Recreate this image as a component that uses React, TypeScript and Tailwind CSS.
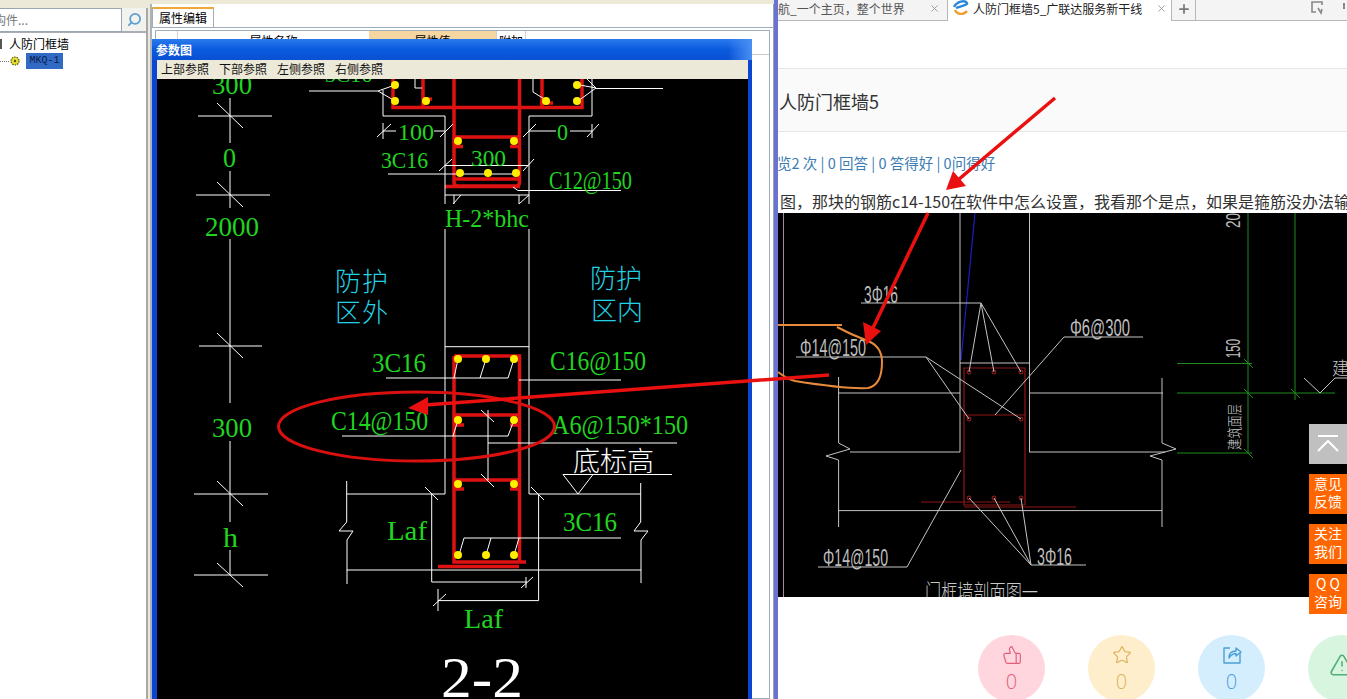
import { Search, ThumbsUp, Star, TriangleAlert, X, Plus } from 'lucide-react'

const cadWhite = [
  // left dimension column
  'M230 98V143M198 116H272M217 103L243 128',
  'M230 171V208M196 195H270M217 182L243 207',
  'M230 239V403M199 346H262M217 333L243 358',
  'M230 441V522M194 494H268M217 481L243 506',
  'M230 550V575M194 575H268M217 563L243 587',
  // top section
  'M309 91H378L395 85M378 91L395 101M383 116V90M383 116H445M529 116H592V79M587 79L596 88L580 85M596 88L578 101M596 88.5H663',
  'M415 79V88H422M533 79V92L546 100',
  'M383 123V139M377 137L391 124M383 131H396M434 131H445M440 137L453 124M523 137L536 124M529 131H556M570 131H592M587 137L599 124M592 124V138',
  'M388 174H516M445 165.5H528M439 171L452 159M523 171L534 159',
  'M518 190.5H621M513 187L518 190.5M445 195H529M453 204L461 195M519 204L529 195M454 195V204M519 195V204',
  'M445 116V204M529 116V204M445 229V494M529 229V494M445 346.7H529',
  // mid leaders
  'M386 378H508M454 378L458 359M480 378L486 359M508 378L514 359M519 380H621',
  'M342 436H508M453 436L458 420M508 436L514 420',
  'M488 443H677M488 410V480M481 410L494 422M481 474L494 487',
  'M563 474.5H672M563 474.5L578 494L593 474.5',
  // lower wall
  'M346.7 494H445M529 494H640.7M346.7 481V522L339 531H353L347 540V584M640.7 483V522L634 531H648L641 540V583',
  'M346.7 570H641M431.7 494V582H527M538.6 494V600.6H438M438 589V611M433 606L446 594M526 577V588M521 588L533 577',
  'M425 487L438 500M531 487L544 500',
  'M464 538H621M464 538L459 555M491 538L486 555M519 538L514 555',
]

const cadDots = [
  [395, 85], [395, 101], [426, 101], [546, 101], [577, 85], [577, 101],
  [458, 141], [514, 141], [460, 173], [488, 173], [516, 173],
  [458, 359], [486, 359], [514, 359], [458, 420], [514, 420],
  [458, 484], [514, 484], [458, 555], [486, 555], [514, 555],
]

const cadRed =
  'M393 79V107.5H582V79M423 79V107M542 79V107M454 79V182Q454 186 458 186H516Q519.5 186 519.5 182V79M454 137H519M454 179H519' +
  'M445 186.5H520M454 356H519.5V562M454 356V562H526M438 566.5H519M454 415H519M454 480H519M455 146.5H463M510 146.5H519M455 425H464M510 425H519M455 489H464M510 489H519M423 99H432M540 103H553'

const cadGreen: [number, number, number, number, string][] = [
  [212, 94, 40, 28, '300'],
  [223, 167, 13, 28, '0'],
  [205, 236, 54, 28, '2000'],
  [212, 437, 40, 28, '300'],
  [223, 547, 15, 28, 'h'],
  [325, 82, 47, 22, '3C16'],
  [398, 140, 36, 24, '100'],
  [557, 140, 11, 24, '0'],
  [381, 168, 47, 24, '3C16'],
  [471, 166, 35, 24, '300'],
  [549, 189, 83, 25, 'C12@150'],
  [445, 227, 84, 25, 'H-2*bhc'],
  [372, 372, 54, 28, '3C16'],
  [550, 370, 96, 28, 'C16@150'],
  [331, 430, 97, 28, 'C14@150'],
  [552, 434, 136, 28, 'A6@150*150'],
  [563, 531, 54, 28, '3C16'],
  [387, 540, 40, 28, 'Laf'],
  [464, 628, 39, 28, 'Laf'],
]

function ParamDrawing() {
  return (
    <svg viewBox="157 79 591 620" width="591" height="620" className="block shrink-0 bg-black" fontFamily="'Liberation Serif', serif">
      <path d={cadRed} fill="none" stroke="#de1212" strokeWidth="3.5" />
      <path d={cadWhite.join('')} fill="none" stroke="#ffffff" strokeWidth="1" />
      {cadDots.map(([x, y]) => (
        <circle key={`${x}-${y}`} cx={x} cy={y} r="4" fill="#ffee00" />
      ))}
      {cadGreen.map(([x, y, w, s, label]) => (
        <text key={`${x}-${y}`} x={x} y={y} fontSize={s} textLength={w} lengthAdjust="spacingAndGlyphs" fill="#20d420">
          {label}
        </text>
      ))}
      <g fontFamily="'Noto Sans CJK SC', sans-serif" fontSize="26" fontWeight="300" fill="#22d3e6">
        <text x="335" y="291" textLength="53">防护</text>
        <text x="335" y="322" textLength="53">区外</text>
        <text x="590" y="288" textLength="52">防护</text>
        <text x="591" y="320" textLength="52">区内</text>
      </g>
      <text x="573" y="471" fontSize="27" fontWeight="300" fontFamily="'Noto Sans CJK SC', sans-serif" fill="#ffffff" textLength="81">底标高</text>
      <text x="441" y="697" fontSize="58" fill="#ffffff" textLength="82" lengthAdjust="spacingAndGlyphs">2-2</text>
    </svg>
  )
}

const photoGrey = [
  'M861 303H981L969 372M981 303L994 372M981 303L1021 372',
  'M960 213V452M1029.5 213V452M960 363H1029.5',
  'M796 357H926L1021 419M926 357L969 419',
  'M838 393H960M1029 393H1163',
  'M838.6 377V443L850 449L826 456L838.6 460V527M850 452H960',
  'M1162 378V443L1176 449L1150 456L1162 460V527M1029 452H1165',
  'M838 510.6H1162',
  'M961 470L907 567H818',
  'M969 498L1031 565M994 498L1031 565M1021 498L1031 565H1086',
  'M1143 337H1064L995 415',
]

function PhotoDrawing() {
  return (
    <svg viewBox="778 213 569 384" width="569" height="384" className="block shrink-0 bg-black" fontFamily="'Liberation Sans', sans-serif">
      <path d="M783.5 213V597" stroke="#a888a8" strokeWidth="1" />
      <path d="M975 213L961 360" stroke="#1c1cc4" strokeWidth="1.2" fill="none" />
      <path d="M964 368H1025V505H964ZM964 415H1025M921 502H1010M964 507H1076" stroke="#8e1616" strokeWidth="1.2" fill="none" />
      {[[969, 372], [994, 372], [1021, 372], [969, 419], [1021, 419], [969, 498], [994, 498], [1021, 498]].map(([x, y]) => (
        <circle key={`${x}-${y}`} cx={x} cy={y} r="2" fill="none" stroke="#b02020" />
      ))}
      <path d={photoGrey.join('')} fill="none" stroke="#c4c4c4" strokeWidth="1" />
      <path d="M1248 213V453M1295 213V400M1177 393H1335M1177 363.5H1252M1177 453H1252M1244 359L1253 368M1244 389L1253 398M1291 389L1300 398M1244 449L1253 458" fill="none" stroke="#1f8a1f" strokeWidth="1" />
      <path d="M1304 378L1320 393L1335 378H1347" fill="none" stroke="#c4c4c4" strokeWidth="1" />
      <g fill="#bdbdbd" fontWeight="300">
        <text x="864" y="303" fontSize="24" textLength="34" lengthAdjust="spacingAndGlyphs">3Φ16</text>
        <text x="800" y="356" fontSize="24" textLength="66" lengthAdjust="spacingAndGlyphs">Φ14@150</text>
        <text x="1070" y="336" fontSize="24" textLength="60" lengthAdjust="spacingAndGlyphs">Φ6@300</text>
        <text x="823" y="566" fontSize="24" textLength="65" lengthAdjust="spacingAndGlyphs">Φ14@150</text>
        <text x="1037" y="565" fontSize="24" textLength="35" lengthAdjust="spacingAndGlyphs">3Φ16</text>
        <text transform="translate(1240 228) rotate(-90)" fontSize="20" textLength="15" lengthAdjust="spacingAndGlyphs">20</text>
        <text transform="translate(1240 358) rotate(-90)" fontSize="20" textLength="19" lengthAdjust="spacingAndGlyphs">150</text>
      </g>
      <g fontFamily="'Noto Sans CJK SC', sans-serif" fill="#c8c8c8" fontWeight="300">
        <text transform="translate(1240 450) rotate(-90)" fontSize="15" textLength="46" lengthAdjust="spacingAndGlyphs">建筑面层</text>
        <text x="1332" y="375" fontSize="18" textLength="34" lengthAdjust="spacingAndGlyphs">建筑</text>
        <text x="925" y="600" fontSize="22" textLength="113" lengthAdjust="spacingAndGlyphs">门框墙剖面图一</text>
      </g>
    </svg>
  )
}

function PropertyPanel() {
  return (
    <div className="flex-1 flex flex-col bg-white border-l-2 border-[#aab4c0] overflow-hidden">
      <div className="h-[24px] flex items-end bg-white border-b border-[#a0aebc]">
        <div className="w-[62px] h-[20px] border-t-2 border-x border-t-[#f0a838] border-x-[#a0aebc] bg-white text-[12px] leading-[18px] text-center text-black">
          属性编辑
        </div>
      </div>
      <div className="mt-[2px] mx-[3px] flex-1 border border-[#a0aebc] text-[12px] text-black">
        <div className="flex h-[24px] leading-[20px] text-center border-b border-[#c8c8c8]">
          <div className="w-[22px] border-r border-[#d0d0d0]" />
          <div className="w-[191px]">属性名称</div>
          <div className="w-[127px] bg-[#f5d6a0]">属性值</div>
          <div className="w-[30px] border-x border-[#d0d0d0]">附加</div>
        </div>
      </div>
    </div>
  )
}

function ParamWindow() {
  return (
    <div className="absolute left-[152px] top-[39px] w-[600px] h-[660px] flex flex-col bg-[#0a46d2] pl-[5px] pr-[4px] overflow-hidden">
      <div className="-ml-[5px] -mr-[4px] h-[21px] flex bg-linear-to-b from-[#2a7aee] via-[#0a5ade] to-[#0a50d2]">
        <div className="flex-1 pl-[4px] text-[12px] leading-[22px] font-bold text-white">参数图</div>
        <div className="w-[24px] bg-linear-to-r from-transparent to-[#4a90f4]" />
      </div>
      <div className="h-[19px] flex gap-[10px] pl-[4px] bg-[#ece9d8] text-[12px] leading-[18px] text-[#111]">
        <span>上部参照</span>
        <span>下部参照</span>
        <span>左侧参照</span>
        <span>右侧参照</span>
      </div>
      <ParamDrawing />
    </div>
  )
}

function TreePanel() {
  return (
    <div className="w-[148px] flex flex-col bg-white border-r-2 border-[#a8a8a8]">
      <div className="flex h-[25px] border-b-2 border-[#a8aeb4] bg-[#f2f2ee]">
        <div className="w-[122px] h-[24px] border border-l-0 border-[#9aa6b2] bg-white text-[12px] leading-[22px] text-[#777] overflow-hidden whitespace-nowrap">
          <span className="-ml-[6px] inline-block">构件...</span>
        </div>
        <div className="flex-1 flex items-center justify-center">
          <Search size={15} strokeWidth={2.8} className="text-[#5f9fd0] -scale-x-100" />
        </div>
      </div>
      <div className="h-[20px] mt-[1px] flex items-center text-[12px] text-black">
        <span className="w-[2px] h-[10px] bg-[#555]" />
        <span className="ml-[7px]">人防门框墙</span>
      </div>
      <div className="flex items-center h-[16px] -mt-[1px]">
        <span className="w-[9px] border-t border-dotted border-[#777]" />
        <svg width="12" height="12" viewBox="0 0 12 12">
          <circle cx="6" cy="6" r="4" fill="#e8e030" stroke="#55551a" strokeWidth="1.2" strokeDasharray="1.5 1" />
          <circle cx="6" cy="6" r="1.2" fill="#55551a" />
        </svg>
        <span className="ml-[5px] w-[37px] h-[16px] bg-[#316ac5] text-[10px] leading-[16px] text-center text-[#0c1c48] font-['Liberation_Mono',monospace]">
          MKQ-1
        </span>
      </div>
    </div>
  )
}

function BrowserTabs() {
  return (
    <div className="h-[21px] shrink-0 flex items-stretch bg-[#f4f4f4] border-b border-[#b8b8b8] text-[12px] leading-[18px] text-[#555]">
      <div className="w-[170px] flex border-r border-[#b8b8b8] overflow-hidden whitespace-nowrap">
        <span className="flex-1">航_一个主页，整个世界</span>
        <X size={11} className="mt-[3px] mr-[7px] text-[#999]" />
      </div>
      <div className="w-[224px] -mb-px flex items-start bg-white border-r border-[#b8b8b8] text-[#222]">
        <svg width="18" height="16" viewBox="0 0 18 16" className="ml-[4px] mr-[3px]">
          <path d="M2 7C5 1 13 0 15 3C16 5 9 6 4 8" fill="none" stroke="#2c86d8" strokeWidth="2.4" />
          <path d="M3 10C5 15 12 15 15 11" fill="none" stroke="#f0a030" strokeWidth="2.4" />
        </svg>
        <span className="whitespace-nowrap">人防门框墙5_广联达服务新干线</span>
        <X size={11} className="mt-[3px] ml-[14px] text-[#999]" />
      </div>
      <div className="w-[24px] flex justify-center border-r border-[#b8b8b8]">
        <Plus size={14} strokeWidth={3} className="mt-[2px] text-[#777]" />
      </div>
      <div className="flex-1 flex justify-end gap-[20px] overflow-hidden">
        <svg width="12" height="14" viewBox="0 0 12 14" className="mt-[1px]">
          <path d="M11 4V1H1V11H5M7 7L10 12L11 8" fill="none" stroke="#888" strokeWidth="1.6" />
        </svg>
        <span className="w-[4px] h-[6px] mt-[3px] border-l-2 border-[#888]" />
      </div>
    </div>
  )
}

function Reaction({ bg, color, count = true, children }: { bg: string; color: string; count?: boolean; children: React.ReactNode }) {
  return (
    <div className={`w-[67px] h-[67px] shrink-0 rounded-full flex flex-col items-center pt-[10px] ${bg} ${color}`}>
      {children}
      {count && <span className="text-[20px] leading-[24px] mt-[5px] font-light font-['Open_Sans',sans-serif]">0</span>}
    </div>
  )
}

function BrowserPane() {
  return (
    <div className="w-[569px] flex flex-col bg-white overflow-hidden">
      <BrowserTabs />
      <div className="mt-[47px] h-[64px] shrink-0 bg-[#fafafa] border-y border-[#e6e6e6] text-[18px] leading-[64px] pl-[1px] text-[#333]">
        人防门框墙5
      </div>
      <div className="mt-[20px] h-[22px] shrink-0 text-[14.5px] leading-[22px] text-[#3c7cb4] whitespace-nowrap">
        <span className="-ml-px inline-block">览2 次 | 0 回答 | 0 答得好 | 0问得好</span>
      </div>
      <div className="mt-[16px] h-[23px] shrink-0 text-[16px] leading-[22px] pl-[2px] text-[#333] whitespace-nowrap overflow-hidden">
        图，那块的钢筋c14-150在软件中怎么设置，我看那个是点，如果是箍筋没办法输
      </div>
      <PhotoDrawing />
      <div className="mt-[38px] ml-[200px] flex shrink-0 gap-[43px]">
        <Reaction bg="bg-[#ffd6dd]" color="text-[#e0607c]">
          <ThumbsUp size={20} strokeWidth={1.4} className="-scale-x-100" />
        </Reaction>
        <Reaction bg="bg-[#ffeecb]" color="text-[#dcb25c]">
          <Star size={20} strokeWidth={1.4} />
        </Reaction>
        <Reaction bg="bg-[#d5eefe]" color="text-[#4c9fd8]">
          <svg width="20" height="20" viewBox="0 0 20 20" fill="none" stroke="currentColor" strokeWidth="1.4" strokeLinejoin="round">
            <path d="M8 3H2V18H18V8" />
            <path d="M7 13C7 8 10 6 14 6V3L19 7L14 11V8.5C11 8.5 9 10 7 13Z" />
          </svg>
        </Reaction>
        <Reaction bg="bg-[#d8f5e0]" color="text-[#4eae74]" count={false}>
          <TriangleAlert size={26} strokeWidth={1.4} className="mt-[7px]" />
        </Reaction>
      </div>
    </div>
  )
}

function SideButtons() {
  return (
    <div className="absolute left-[1309px] top-[424px] w-[38px] flex flex-col gap-[10px] text-white text-[14px] leading-[18px] text-center">
      <div className="h-[40px] bg-[#c0c0c0] flex items-center justify-center">
        <svg width="22" height="18" viewBox="0 0 22 18" fill="none" stroke="#ffffff" strokeWidth="2">
          <path d="M1 1H21M1 16L11 6L21 16" />
        </svg>
      </div>
      <div className="h-[40px] bg-[#ff6600]">意见<br />反馈</div>
      <div className="h-[40px] bg-[#ff6600]">关注<br />我们</div>
      <div className="h-[40px] bg-[#ff6600]">Q Q<br />咨询</div>
    </div>
  )
}

function Annotations() {
  return (
    <svg viewBox="0 0 1347 699" width="1347" height="699" className="absolute left-0 top-0 pointer-events-none">
      <ellipse cx="416.5" cy="426.5" rx="138" ry="34.5" fill="none" stroke="#d81010" strokeWidth="3" />
      <path d="M778 325H842M837 327C848 333 860 338 868 341C878 345 882 352 882 362C882 376 878 386 868 388C850 389 820 385 795 381C787 379 782 375 778 372" fill="none" stroke="#e88a3c" strokeWidth="2" />
      <path d="M829 375L425 405M928 213L872 330M1055 98L958 180" fill="none" stroke="#ea1010" strokeWidth="3.5" />
      <path d="M408 408L428 397L428 415Z" fill="#ea1010" />
      <path d="M866 345L863 322L881 331Z" fill="#ea1010" />
      <path d="M946 190L953 171L966 186Z" fill="#ea1010" />
    </svg>
  )
}

export default function App() {
  return (
    <div className="relative w-[1347px] h-[699px] overflow-hidden flex bg-white font-['Noto_Sans_CJK_SC','Liberation_Sans',sans-serif]">
      <div className="w-[774px] flex flex-col bg-[#ece9d8]">
        <div className="h-[8px] shrink-0" />
        <div className="flex-1 flex gap-[2px] min-h-0">
          <TreePanel />
          <div className="flex-1 flex flex-col -mt-[4px] border-r border-[#9aa4ae]">
            <PropertyPanel />
          </div>
        </div>
      </div>
      <div className="w-[4px] bg-[#6a72d2]" />
      <BrowserPane />
      <ParamWindow />
      <SideButtons />
      <Annotations />
    </div>
  )
}
